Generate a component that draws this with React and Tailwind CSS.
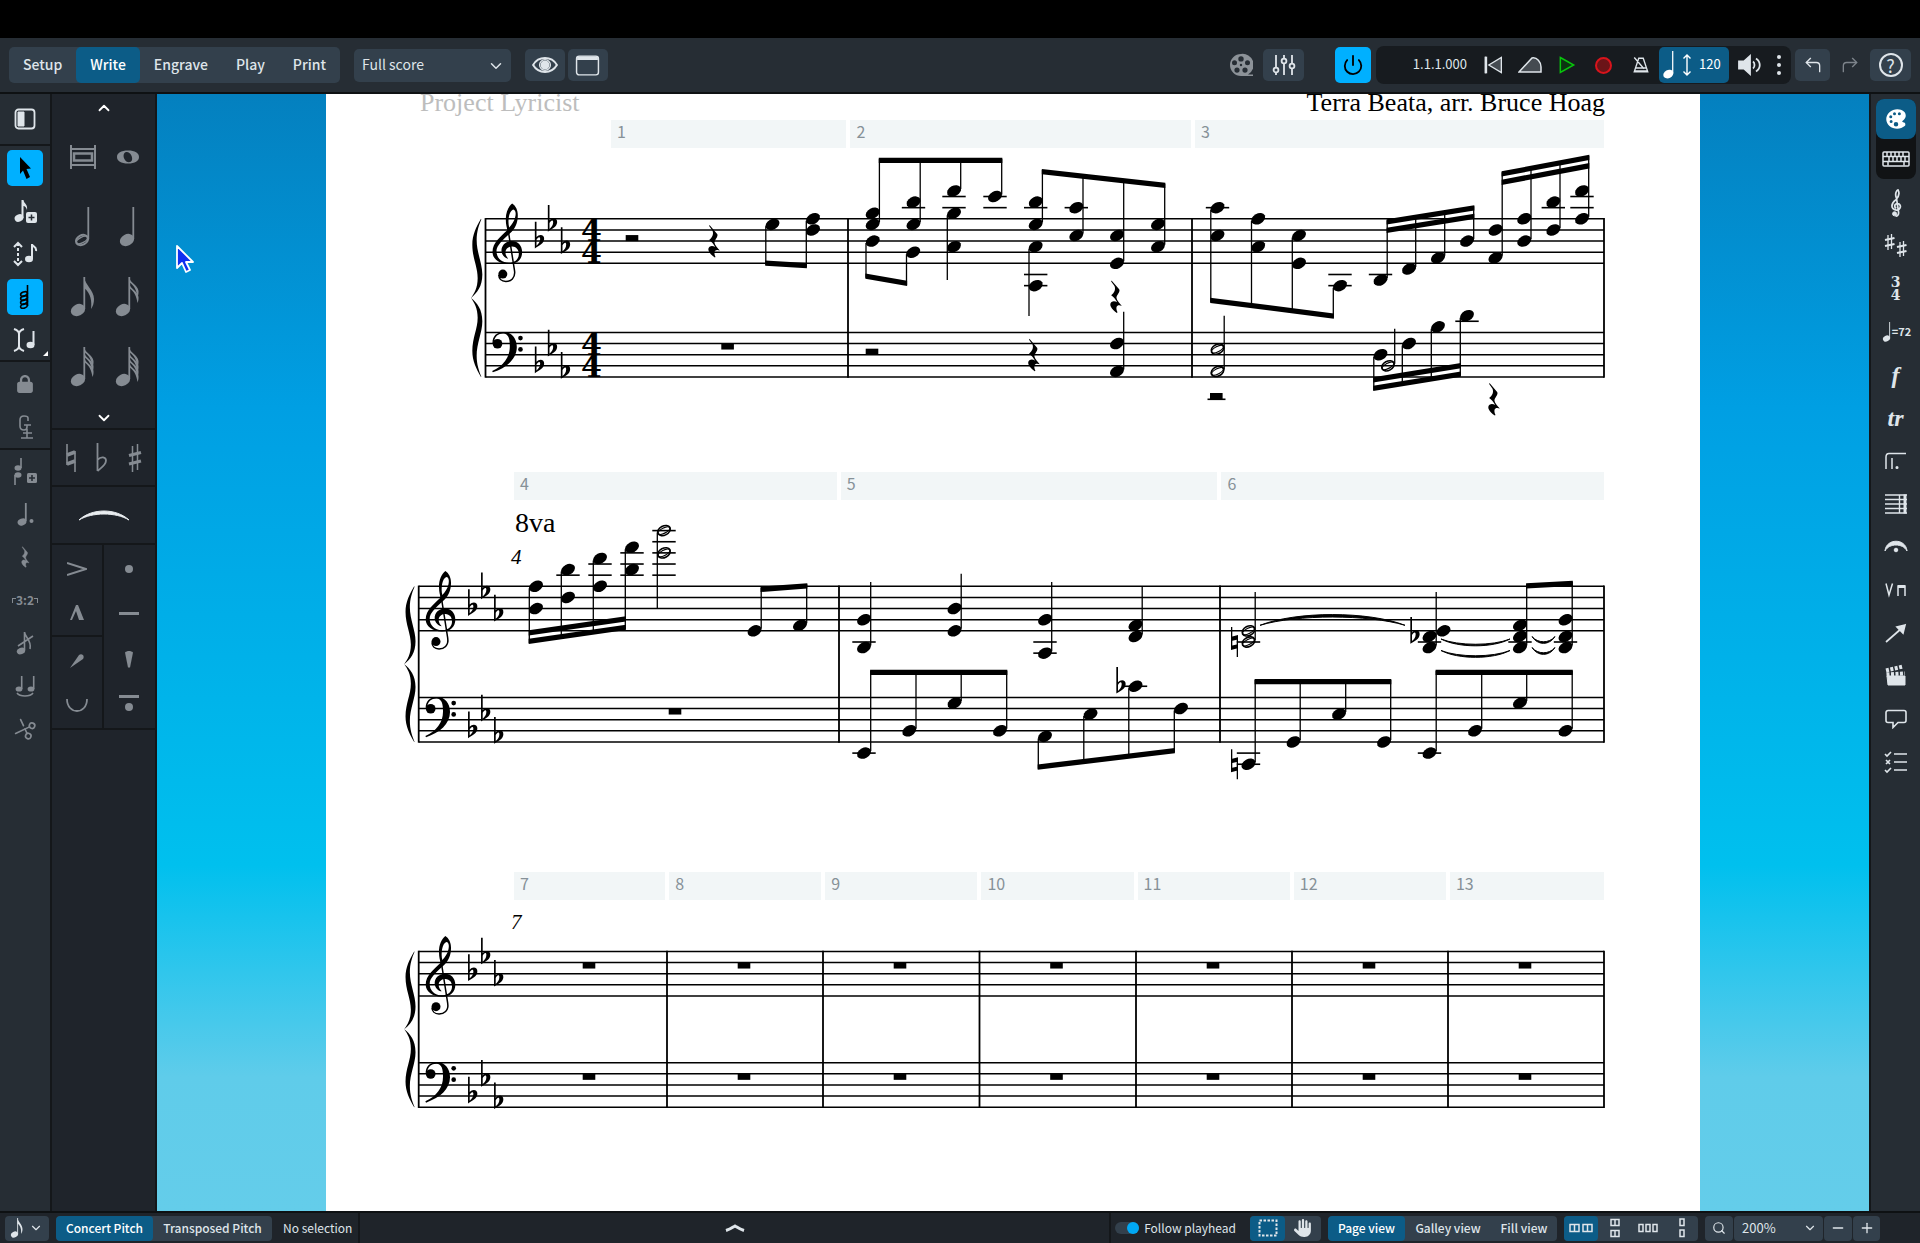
import { ChevronDown, ChevronUp, CornerUpLeft, CornerUpRight, Minus, Plus, Power, Search, Scissors } from 'lucide-react';
import { FaHand, FaLock } from 'react-icons/fa6';
import { IoColorPalette } from 'react-icons/io5';

/* ---------- engraving ---------- */

const HALF = 5.57; // half a staff space

function ledgersFor(positions) {
  const out = [];
  const min = Math.min(...positions);
  const max = Math.max(...positions);
  for (let p = -2; p >= min; p -= 2) out.push(p);
  for (let p = 10; p <= max; p += 2) out.push(p);
  return out;
}

function Head({ x, y, open }) {
  if (open) {
    return (
      <g transform={`translate(${x} ${y}) rotate(-28)`}>
        <ellipse rx="6.7" ry="4.6" fill="none" stroke="#000" strokeWidth="1.6" />
        <ellipse rx="6.4" ry="2.6" fill="none" stroke="#000" strokeWidth="1.2" />
      </g>
    );
  }
  return <ellipse rx="7.4" ry="5.2" transform={`translate(${x} ${y}) rotate(-28)`} />;
}

// n: x, p (staff positions from the top line), up / down (where the stem ends), open
function Note({ n, top }) {
  const ys = n.p.map((p) => top + p * HALF);
  const stemX = n.up !== undefined ? n.x + 6.7 : n.x - 6.7;
  const from = n.up !== undefined ? Math.max(...ys) - 2 : Math.min(...ys) + 2;
  const to = n.up !== undefined ? n.up : n.down;
  return (
    <g>
      {ledgersFor(n.p).map((p) => (
        <line key={p} x1={n.x - 11.7} x2={n.x + 11.7} y1={top + p * HALF} y2={top + p * HALF} stroke="#000" strokeWidth="1.6" />
      ))}
      {ys.map((y) => <Head key={y} x={n.x} y={y} open={n.open} />)}
      {to !== undefined && <line x1={stemX} x2={stemX} y1={from} y2={to} stroke="#000" strokeWidth="1.3" />}
    </g>
  );
}

// A beamed run. The beam line is the outer edge, dir 1 puts the stems above it.
function Beamed({ g, top }) {
  const { notes, y1, y2, dir, count = 1 } = g;
  const side = dir === 1 ? -6.7 : 6.7;
  const xa = notes[0][0] + side;
  const xb = notes[notes.length - 1][0] + side;
  const at = (x) => y1 + ((y2 - y1) * (x - xa)) / (xb - xa);
  return (
    <g>
      {notes.map(([x, ...p]) => (
        <Note key={x} top={top} n={dir === 1 ? { x, p, down: at(x + side) - 1 } : { x, p, up: at(x + side) + 1 }} />
      ))}
      {Array.from({ length: count }, (_, i) => {
        const d = -dir * i * 8.4;
        const t = -dir * 5.3;
        return (
          <polygon
            key={i}
            points={`${xa - 0.6},${y1 + d} ${xb + 0.6},${y2 + d} ${xb + 0.6},${y2 + d + t} ${xa - 0.6},${y1 + d + t}`}
          />
        );
      })}
    </g>
  );
}

function Flat({ x, y }) {
  return (
    <path
      fillRule="evenodd"
      transform={`translate(${x} ${y}) scale(0.333)`}
      d="M-2-58h5V-12C11-22 27-20 26-6C25 7 12 14-2 22ZM3-4V14C9 9 14 3 14-6C14-14 8-14 3-4Z"
    />
  );
}

function Natural({ x, y }) {
  return <path fillRule="evenodd" transform={`translate(${x} ${y})`} d="M-3.5-15h1.3V-5.5L3.5-7V15H2.2V6.5L-3.5 8ZM-2.2-1.2V3.6L2.2 2.5V-2.3Z" />;
}

function QuarterRest({ x, y }) {
  return (
    <path
      transform={`translate(${x} ${y}) scale(0.333)`}
      d="M-12-49L11-22C16-14 2-4 3 4C4 12 13 20 19 28C6 22-2 30 6 47L4 49C-12 38-21 24-12 16C-6 12 0 14 5 17C0 8-7 0-13-4C-3-12 1-22-3-32L-13-46Z"
    />
  );
}

function BlockRest({ x, line, hang }) {
  return <rect x={x - 6.3} y={hang ? line : line - 6} width="12.6" height="6" />;
}

function TrebleClef({ x, y }) {
  return (
    <g transform={`translate(${x} ${y}) scale(0.333) translate(-98 -71)`}>
      <path
        fillRule="evenodd"
        d="M157 25C146 34 137 52 138 74C138 88 141 97 143 105C124 124 98 142 98 171C98 192 119 207 147 207C172 207 187 193 187 171C187 152 174 138 156 138C138 138 124 151 125 168C126 181 136 190 146 191C142 187 136 180 137 170C138 160 147 154 157 154C170 154 178 165 177 178C176 194 163 203 147 203C124 203 110 188 110 168C110 151 130 133 150 115C166 100 174 84 174 60C174 45 168 32 157 25ZM160 43C168 44 169 56 166 66C163 78 156 88 148 97C143 78 147 48 160 43Z"
      />
      <path d="M144 98L164 226C168 250 152 259 138 259C124 259 117 250 117 240" fill="none" stroke="#000" strokeWidth="4.5" />
      <circle cx="129" cy="237" r="13.5" />
    </g>
  );
}

function BassClef({ x, y }) {
  return (
    <g transform={`translate(${x} ${y}) scale(0.333) translate(-98 -412)`}>
      <path d="M98 446C97 424 110 411 132 411C156 411 171 430 171 456C171 492 140 518 99 532L97 528C130 512 150 488 150 454C150 430 146 416 130 415C115 415 105 424 103 438Z" />
      <circle cx="113" cy="446" r="14.5" />
      <circle cx="182" cy="429" r="7" />
      <circle cx="182" cy="463" r="7" />
    </g>
  );
}

function Brace({ x, top, bottom }) {
  const half = 'M30-238C16-214 4-190 4-160C4-120 20-94 20-60C20-30 10-14 0 0C18-14 34-34 34-70C34-104 17-136 17-174C17-200 24-220 31-237Z';
  return (
    <g transform={`translate(${x} ${(top + bottom) / 2}) scale(0.333 ${(bottom - top) / 476})`}>
      <path d={half} />
      <path d={half} transform="scale(1 -1)" />
    </g>
  );
}

function Four({ x, y }) {
  return (
    <text x={x} y={y} textAnchor="middle" className="font-['DejaVu_Serif',serif] text-[30px] font-bold">4</text>
  );
}

function System({ sys }) {
  const { left, treble, bass, view, bars } = sys;
  const right = 1604;
  const bottom = bass + HALF * 8;
  return (
    <svg viewBox={view} className="block w-full h-auto" role="img" aria-label={sys.label}>
      <Brace x={left - 14.5} top={treble} bottom={bottom} />
      {[treble, bass].map((top) => [0, 2, 4, 6, 8].map((p) => (
        <line key={`${top}-${p}`} x1={left} x2={right} y1={top + p * HALF} y2={top + p * HALF} stroke="#000" strokeWidth="1.5" />
      )))}
      {[left, ...bars, right].map((x) => (
        <line key={x} x1={x} x2={x} y1={treble - 0.7} y2={bottom + 0.7} stroke="#000" strokeWidth="1.8" />
      ))}
      <TrebleClef x={left + 7} y={treble} />
      <BassClef x={left + 7} y={bass} />
      {[[50, 4, 6], [63, 1, 3], [76, 5, 7]].map(([dx, t, b]) => (
        <g key={dx}>
          <Flat x={left + dx} y={treble + t * HALF} />
          <Flat x={left + dx} y={bass + b * HALF} />
        </g>
      ))}
      {sys.time && [treble, bass].map((top) => (
        <g key={top}>
          <Four x={left + 106} y={top + HALF * 4} />
          <Four x={left + 106} y={top + HALF * 8} />
        </g>
      ))}
      {['t', 'b'].map((s) => {
        const top = s === 't' ? treble : bass;
        const part = sys[s];
        return (
          <g key={s}>
            {(part.beams || []).map((g, i) => <Beamed key={i} g={g} top={top} />)}
            {(part.notes || []).map((n, i) => <Note key={i} n={n} top={top} />)}
            {(part.quarterRests || []).map(([x, y]) => <QuarterRest key={x} x={x} y={y} />)}
            {(part.halfRests || []).map((x) => <BlockRest key={x} x={x} line={top + HALF * 4} />)}
            {(part.wholeRests || []).map((x) => <BlockRest key={x} x={x} line={top + HALF * 2} hang />)}
            {(part.flats || []).map(([x, p]) => <Flat key={x} x={x} y={top + p * HALF} />)}
            {(part.naturals || []).map(([x, p]) => <Natural key={x} x={x} y={top + p * HALF} />)}
          </g>
        );
      })}
      {(sys.ties || []).map(([x1, x2, y, bend]) => {
        const w = (x2 - x1) / 4;
        return (
          <path
            key={`${x1}-${y}`}
            d={`M${x1} ${y}C${x1 + w} ${y + bend} ${x2 - w} ${y + bend} ${x2} ${y}C${x2 - w} ${y + bend * 1.3} ${x1 + w} ${y + bend * 1.3} ${x1} ${y}Z`}
            stroke="#000"
            strokeWidth="1"
          />
        );
      })}
      {sys.extra}
    </svg>
  );
}

const SYSTEMS = [
  {
    label: 'Bars 1 to 3',
    view: '326 1 1374 324',
    left: 485.5, treble: 71.8, bass: 185.4, time: true,
    bars: [848, 1192],
    ribbon: { pad: 'pl-[285px]', cells: [[1, 234], [2, 341], [3, 411]] },
    t: {
      beams: [
        { notes: [[772.5, 1], [813, 0, 2]], y1: 118.7, y2: 121.3, dir: 1 },
        { notes: [[872.7, -1, 1], [913.5, -3, 1], [954, -5], [995, -4]], y1: 10.7, y2: 10.7, dir: -1 },
        { notes: [[872.7, 4], [913.2, 6]], y1: 131.7, y2: 139, dir: 1 },
        { notes: [[1035.7, -3, 1], [1076.3, -2, 3], [1117, 3, 8], [1158, 1, 5]], y1: 22, y2: 35.7, dir: -1 },
        { notes: [[1217.5, -2, 3], [1258.2, 0, 5], [1299, 3, 8], [1340, 12]], y1: 156, y2: 171.7, dir: 1 },
        { notes: [[1380.5, 11], [1409, 9], [1438, 7], [1467, 4]], y1: 72.3, y2: 58.3, dir: -1, count: 2 },
        { notes: [[1495.5, 2, 7], [1524.3, 0, 4], [1553.3, -3, 2], [1582, -5, 0]], y1: 24.3, y2: 7.7, dir: -1, count: 2 },
      ],
      notes: [
        { x: 954, p: [-1, 5], down: 133 },
        { x: 1035.7, p: [5, 12], down: 169 },
      ],
      halfRests: [632],
      quarterRests: [[713.5, 94.3], [1115.5, 149.7]],
    },
    b: {
      beams: [
        { notes: [[1380.5, 4], [1409, 2], [1438, -1], [1467, -3]], y1: 244, y2: 229.7, dir: 1, count: 2 },
      ],
      notes: [
        { x: 1117, p: [2, 7], up: 164.7 },
        { x: 1217.5, p: [3, 7], up: 168.7, open: true },
        { x: 1388, p: [6], up: 181.7, open: true },
      ],
      wholeRests: [727.6],
      halfRests: [872],
      quarterRests: [[1033.4, 208], [1493.5, 252.3]],
    },
    extra: (
      <g>
        <rect x="1210" y="246" width="12.6" height="6" />
        <line x1="1207.5" x2="1225.5" y1="252.3" y2="252.3" stroke="#000" strokeWidth="1.6" />
      </g>
    ),
  },
  {
    label: 'Bars 4 to 6',
    view: '326 0 1374 372',
    left: 418.7, treble: 86.3, bass: 197.4,
    bars: [839, 1220],
    ribbon: { pad: 'pl-[188px]', cells: [[4, 322], [5, 377], [6, 383]] },
    t: {
      beams: [
        { notes: [[536, 0, 4], [568, -3, 2], [600, -5, 0], [632, -7, -3]], y1: 144, y2: 130, dir: 1, count: 2 },
        { notes: [[754.5, 8], [800, 7]], y1: 86.7, y2: 83.3, dir: -1 },
        { notes: [[1520, 7, 9, 11], [1565.5, 6, 9, 11]], y1: 83.3, y2: 80.7, dir: -1 },
      ],
      notes: [
        { x: 664, p: [-10, -6], down: 108, open: true },
        { x: 864, p: [6, 11], up: 82 },
        { x: 954.5, p: [4, 8], up: 73.7 },
        { x: 1045, p: [6, 12], up: 82 },
        { x: 1135.5, p: [7, 9], up: 86 },
        { x: 1248.5, p: [8, 10], up: 92, open: true },
        { x: 1429.5, p: [9, 11], up: 92 },
        { x: 1443.5, p: [8] },
      ],
      flats: [[1411, 9]],
      naturals: [[1234.5, 10]],
    },
    b: {
      beams: [
        { notes: [[864, 10], [909.3, 6], [954.5, 1], [1000, 6]], y1: 169.7, y2: 169.7, dir: -1 },
        { notes: [[1045, 7], [1090.5, 3], [1135.5, -2], [1181, 2]], y1: 269.7, y2: 253.3, dir: 1 },
        { notes: [[1248.5, 12], [1293.5, 8], [1339, 3], [1384, 8]], y1: 179, y2: 179, dir: -1 },
        { notes: [[1429.5, 10], [1475, 6], [1520, 1], [1565.5, 6]], y1: 169.7, y2: 169.7, dir: -1 },
      ],
      wholeRests: [675],
      flats: [[1117, -2]],
      naturals: [[1234.5, 12]],
    },
    ties: [
      [1260, 1405, 125.3, -11],
      [1441, 1510, 139, 7],
      [1441, 1510, 150.5, 7],
      [1532, 1555, 136.5, 7],
      [1532, 1555, 147.5, 7],
    ],
    extra: (
      <g>
        <text x="515" y="32" className="font-['Liberation_Serif',serif] text-[28px]">8va</text>
        <text x="511" y="64" className="font-['Liberation_Serif',serif] text-[21px] italic">4</text>
      </g>
    ),
  },
  {
    label: 'Bars 7 to 13',
    view: '326 0 1374 372',
    left: 418.7, treble: 51.4, bass: 162.7,
    bars: [667, 823, 979.5, 1136, 1292, 1448],
    ribbon: { pad: 'pl-[188px]', cells: [[7, 151], [8, 152], [9, 152], [10, 152], [11, 152], [12, 152], [13, 154]] },
    t: { wholeRests: [589, 744, 900, 1056.5, 1213, 1369, 1525] },
    b: { wholeRests: [589, 744, 900, 1056.5, 1213, 1369, 1525] },
    extra: <text x="511" y="29" className="font-['Liberation_Serif',serif] text-[21px] italic">7</text>,
  },
];

function Paper() {
  return (
    <article className="mx-auto w-full max-w-[1374px] bg-white text-black">
      <header className="flex h-[26px] justify-between pr-[95px] pl-[94px] font-['Liberation_Serif',serif] text-[26px] leading-[18px] whitespace-nowrap">
        <span className="text-[#bdbdbd]">Project Lyricist</span>
        <span>Terra Beata, arr. Bruce Hoag</span>
      </header>
      {SYSTEMS.map((sys) => (
        <section key={sys.label}>
          <div className={`flex gap-1 pr-24 ${sys.ribbon.pad}`}>
            {sys.ribbon.cells.map(([n, w]) => (
              <div key={n} className="flex h-7 basis-0 items-center bg-[#f2f6f7] pb-1.5 pl-1.5 text-base leading-5 text-[#869198]" style={{ flexGrow: w }}>
                {n}
              </div>
            ))}
          </div>
          <System sys={sys} />
        </section>
      ))}
    </article>
  );
}

/* ---------- note icons ---------- */

function NoteIcon({ flags = 0, open, className = 'w-7 h-10' }) {
  return (
    <svg viewBox={flags ? '0 0 28 40' : '-4 0 28 40'} className={className} fill="currentColor">
      {open ? (
        <g transform="translate(9 33) rotate(-28)" fill="none" stroke="currentColor">
          <ellipse rx="6.4" ry="4.8" strokeWidth="2" />
          <ellipse rx="6" ry="2.8" strokeWidth="1.4" />
        </g>
      ) : (
        <ellipse rx="7.4" ry="5.8" transform="translate(9 33) rotate(-28)" />
      )}
      <path d="M14.4 0h1.8v32h-1.800z" />
      {Array.from({ length: flags }, (_, i) => (
        <path
          key={i}
          transform={`translate(0 ${i * (flags > 2 ? 5 : 6)})`}
          d={flags === 1
            ? 'M15 0C16 8 25 13 25 22C25 26 24 29 22 32C23 25 22 16 15 11Z'
            : 'M15 0C16 6 24 8 24.500 14C24.600 16 24.500 18 23.500 20C22.500 13 20 8 15 5Z'}
        />
      ))}
    </svg>
  );
}

function Svg({ box = '0 0 24 24', className = 'w-6 h-6', children, ...rest }) {
  return (
    <svg viewBox={box} className={className} fill="none" stroke="currentColor" strokeWidth="2" {...rest}>
      {children}
    </svg>
  );
}

/* ---------- top toolbar ---------- */

const MODES = ['Setup', 'Write', 'Engrave', 'Play', 'Print'];
const TOOL = 'flex items-center justify-center rounded-[5px] bg-[#33404c]';

function TopBar() {
  return (
    <header className="flex h-[56px] shrink-0 items-center border-b-2 border-[#0e1113] bg-[#262d34] pr-[9px] pl-[9px]">
      <nav className="flex h-9 overflow-hidden rounded-[5px] bg-[#33404c]">
        {MODES.map((m) => (
          <button key={m} className={`px-3.5 pb-0.5 text-sm font-medium ${m === 'Write' ? 'rounded-[5px] bg-[#0c5c87] text-white' : ''}`}>
            {m}
          </button>
        ))}
      </nav>

      <div className="relative ml-3.5">
        <select aria-label="Layout" className="h-[33px] w-[157px] appearance-none rounded-[5px] bg-[#33404c] pb-0.5 pl-2 text-sm">
          <option>Full score</option>
        </select>
        <ChevronDown className="pointer-events-none absolute top-2 right-1.5 h-[18px] w-[18px]" />
      </div>

      <button aria-label="View options" className={`${TOOL} ml-3.5 h-8 w-10`}>
        <Svg className="h-[26px] w-[26px]" strokeWidth="1.800">
          <path d="M1 12C6 3.500 18 3.500 23 12C18 20.500 6 20.500 1 12Z" />
          <circle cx="12" cy="12" r="5" strokeWidth="1.200" />
          <circle cx="12" cy="12" r="3.200" fill="currentColor" />
        </Svg>
      </button>
      <button aria-label="Window" className={`${TOOL} ml-[3px] h-8 w-10`}>
        <Svg className="h-[25px] w-[25px]" strokeWidth="1.400">
          <rect x="1.500" y="3" width="21" height="18" rx="2.500" />
          <path d="M2 5h20" strokeWidth="3.500" />
        </Svg>
      </button>

      <div className="ml-auto flex items-center">
        <button aria-label="Video" className="mr-2.5 text-[#8c9298]">
          <Svg strokeWidth="0" fill="currentColor">
            <path
              fillRule="evenodd"
              d="M12 1a11 11 0 1 0 0 22h12v-1.500h-5A11 11 0 0 0 12 1ZM12 3.200a2.700 2.700 0 1 1 0 5.400a2.700 2.700 0 0 1 0-5.400ZM5.500 7.200a2.500 2.500 0 1 1 0 5a2.500 2.500 0 0 1 0-5ZM18.500 7.200a2.500 2.500 0 1 1 0 5a2.500 2.500 0 0 1 0-5ZM12 10.800a1.200 1.200 0 1 1 0 2.400a1.200 1.200 0 0 1 0-2.400ZM8 14.500a2.600 2.600 0 1 1 0 5.200a2.600 2.600 0 0 1 0-5.200ZM16 14.500a2.600 2.600 0 1 1 0 5.200a2.600 2.600 0 0 1 0-5.200Z"
            />
          </Svg>
        </button>
        <button aria-label="Mixer" className={`${TOOL} h-8 w-[41px]`}>
          <Svg strokeWidth="1.800">
            <path d="M4 2v12M4 20v2M12 2v3M12 11v11M20 2v8M20 16v6" />
            <circle cx="4" cy="17" r="2.400" />
            <circle cx="12" cy="8" r="2.400" />
            <circle cx="20" cy="13" r="2.400" />
          </Svg>
        </button>
        <button aria-label="Activate project" className="ml-[31px] flex h-9 w-9 items-center justify-center rounded-[5px] bg-[#00b0ff] text-black">
          <Power className="h-[22px] w-[22px]" strokeWidth={2} />
        </button>

        <div className="ml-[5px] flex h-[38px] items-center rounded-lg bg-[#171b1f]">
          <span className="w-[98px] pr-[7px] pb-0.5 text-right text-[13px]">1.1.1.000</span>
          <button aria-label="Rewind" className="flex w-[37px] justify-center">
            <Svg className="h-5 w-5" strokeWidth="1.600" fill="#454b51">
              <path d="M3 2v20M22 3v18L7 12Z" />
              <path d="M3.500 2v20" strokeWidth="3" />
            </Svg>
          </button>
          <button aria-label="Play from here" className="flex w-[37px] justify-center">
            <Svg strokeWidth="1.500" fill="#454b51">
              <path d="M1 19L14 5C19 4 23 9 23 14V19Z" />
            </Svg>
          </button>
          <button aria-label="Play" className="flex w-[37px] justify-center text-[#08c40c]">
            <Svg className="h-5 w-5" strokeWidth="1.800" fill="#0b3510">
              <path d="M4 3L20 12L4 21Z" />
            </Svg>
          </button>
          <button aria-label="Record" className="flex w-[37px] justify-center">
            <span className="h-[17px] w-[17px] rounded-full border-2 border-[#d8141c] bg-[#6b1418]" />
          </button>
          <button aria-label="Click" className="flex w-[37px] justify-center">
            <Svg className="h-[18px] w-[18px]" strokeWidth="1.800">
              <path d="M9 3h6l6 18H3ZM5 16h14M16 17L3 2M3 20h18" />
            </Svg>
          </button>
          <button aria-label="Tempo" className="flex h-9 w-[70px] items-center rounded-[5px] bg-[#0c5c87] text-[13px] text-white">
            <NoteIcon className="h-7 w-5" />
            <Svg box="0 0 10 24" className="mx-0.5 h-6 w-3" strokeWidth="1.400">
              <path d="M5 2v20M1.500 5.500L5 2L8.500 5.500M1.500 18.500L5 22L8.500 18.500" />
            </Svg>
            <span className="ml-1 pb-0.5">120</span>
          </button>
          <button aria-label="Volume" className="flex w-[38px] justify-center pl-1">
            <Svg strokeWidth="1.800">
              <path d="M1 8.500h5L12 3v18L6 15.500H1Z" fill="currentColor" />
              <path d="M15 8.500C17 10 17 14 15 15.500M18 5.500C23 9 23 15 18 18.500" />
            </Svg>
          </button>
          <button aria-label="More" className="flex w-6 justify-center">
            <Svg strokeWidth="0" fill="currentColor">
              <circle cx="12" cy="4" r="2" />
              <circle cx="12" cy="12" r="2" />
              <circle cx="12" cy="20" r="2" />
            </Svg>
          </button>
        </div>

        <button aria-label="Undo" className={`${TOOL} ml-1 h-8 w-[35px]`}>
          <CornerUpLeft className="h-5 w-5" strokeWidth={1.6} />
        </button>
        <button aria-label="Redo" className="flex w-10 justify-center text-[#7d848b]">
          <CornerUpRight className="h-5 w-5" strokeWidth={1.6} />
        </button>
        <button aria-label="Help" className={`${TOOL} h-8 w-[41px]`}>
          <span className="flex h-6 w-6 items-center justify-center rounded-full border-2 border-[#dfe5ea] text-lg leading-none">?</span>
        </button>
      </div>
    </header>
  );
}

/* ---------- left side ---------- */

function RailButton({ label, active, children }) {
  return (
    <button aria-label={label} className={`flex h-9 w-9 items-center justify-center rounded-[5px] ${active ? 'bg-[#00b0ff] text-black' : ''}`}>
      {children}
    </button>
  );
}

function LeftRail() {
  return (
    <aside className="flex w-[52px] shrink-0 flex-col border-r-2 border-[#14171a] bg-[#262d34]">
      <div className="flex h-[52px] items-center justify-center border-b-2 border-[#14171a]">
        <RailButton label="Show panels">
          <Svg className="h-6 w-6" strokeWidth="1.800">
            <rect x="2.500" y="2.500" width="19" height="19" rx="3" />
            <path d="M5 5h6v14H5Z" fill="currentColor" strokeWidth="1" />
          </Svg>
        </RailButton>
      </div>

      <div className="relative flex h-[216px] flex-col items-center gap-[7px] border-b-2 border-[#14171a] pt-1">
        <RailButton label="Select" active>
          <Svg strokeWidth="0" fill="currentColor">
            <path d="M7 1L18 12.500L13.500 13L17 21L13.500 23L10 14.500L7 18Z" />
          </Svg>
        </RailButton>
        <RailButton label="Note input">
          <Svg box="0 0 26 26" className="h-[26px] w-[26px]" strokeWidth="0" fill="currentColor">
            <ellipse cx="7" cy="20" rx="4.500" ry="3.600" transform="rotate(-25 7 20)" />
            <path d="M9.500 2h2C12 6 16 6 15 12C14 9 13 8 11.500 8V20h-2Z" />
            <rect x="14" y="14" width="11" height="11" rx="2" />
            <path d="M19.500 16.500v6M16.500 19.500h6" stroke="#262d34" strokeWidth="1.500" />
          </Svg>
        </RailButton>
        <RailButton label="Pitch before duration">
          <Svg box="0 0 26 26" className="h-[26px] w-[26px]" strokeWidth="2">
            <path d="M6 2v22" strokeDasharray="3 2" />
            <path d="M2 6L6 2L10 6M2 20L6 24L10 20" />
            <ellipse cx="17" cy="18" rx="4" ry="3.200" fill="currentColor" strokeWidth="0" />
            <path d="M20 18V3C20 6 25 5 24 10" />
          </Svg>
        </RailButton>
        <RailButton label="Chord input" active>
          <Svg strokeWidth="1.600">
            <ellipse cx="11" cy="21" rx="3.500" ry="2" transform="rotate(-20 11 21)" />
            <ellipse cx="11" cy="17" rx="3.500" ry="2" transform="rotate(-20 11 17)" />
            <ellipse cx="11" cy="13" rx="3.500" ry="2" transform="rotate(-20 11 13)" />
            <ellipse cx="11" cy="9" rx="3.500" ry="2" transform="rotate(-20 11 9)" />
            <path d="M14.500 21V0" />
          </Svg>
        </RailButton>
        <RailButton label="Insert mode">
          <Svg box="0 0 26 26" className="h-[26px] w-[26px]" strokeWidth="2">
            <path d="M2 2C5 3 7 4 7 7V19C7 22 5 23 2 24M12 2C9 3 7 4 7 7M12 24C9 23 7 22 7 19" />
            <ellipse cx="18.500" cy="18" rx="4" ry="3.200" fill="currentColor" strokeWidth="0" />
            <path d="M21.500 18V4" />
          </Svg>
        </RailButton>
        <span className="absolute right-0.5 bottom-1 border-b-[5px] border-l-[5px] border-b-white border-l-transparent" />
      </div>

      <div className="flex h-[88px] flex-col items-center gap-[7px] border-b-2 border-[#14171a] pt-1 text-[#858b92]">
        <RailButton label="Lock duration"><FaLock className="h-[18px] w-[18px]" /></RailButton>
        <RailButton label="Force duration">
          <Svg strokeWidth="1.600">
            <path d="M15 6V3C15 1 13 1 11 1C8 1 7 3 7 5V11C7 14 9 15 11 15C13 15 14 14 14 12V10M11 10h7M14 14v9M10 18h9M8 23h12" />
          </Svg>
        </RailButton>
      </div>

      <div className="flex flex-1 flex-col items-center gap-[7px] pt-[3px] text-[#858b92]">
        <RailButton label="Add notes">
          <Svg box="0 0 26 28" className="h-7 w-[26px]" strokeWidth="1.600">
            <ellipse cx="6" cy="11" rx="3.500" ry="2.800" fill="currentColor" strokeWidth="0" />
            <path d="M9 11V1M3 18v10" />
            <ellipse cx="6" cy="18" rx="3.500" ry="2.800" fill="currentColor" strokeWidth="0" />
            <rect x="15" y="16" width="10" height="10" rx="1.500" fill="currentColor" strokeWidth="0" />
            <path d="M20 18v6M17 21h6" stroke="#262d34" />
          </Svg>
        </RailButton>
        <RailButton label="Dotted note">
          <Svg strokeWidth="1.800">
            <ellipse cx="9" cy="20" rx="4.500" ry="3.400" fill="currentColor" strokeWidth="0" transform="rotate(-20 9 20)" />
            <path d="M12.800 19V1" />
            <circle cx="18.500" cy="19" r="2" fill="currentColor" strokeWidth="0" />
          </Svg>
        </RailButton>
        <RailButton label="Rest">
          <Svg box="-20 -52 40 104" className="h-[22px] w-4" strokeWidth="2" fill="currentColor">
            <path d="M-12-49L11-22C16-14 2-4 3 4C4 12 13 20 19 28C6 22-2 30 6 47L4 49C-12 38-21 24-12 16C-6 12 0 14 5 17C0 8-7 0-13-4C-3-12 1-22-3-32L-13-46Z" />
          </Svg>
        </RailButton>
        <RailButton label="Tuplets">
          <span className="flex items-center text-xs font-bold">
            <i className="h-[5px] w-1 border-t border-l border-[#858b92]" />
            <span>3:2</span>
            <i className="h-[5px] w-1 border-t border-r border-[#858b92]" />
          </span>
        </RailButton>
        <RailButton label="Grace notes">
          <Svg strokeWidth="1.600">
            <ellipse cx="8" cy="20" rx="4.300" ry="3.300" fill="currentColor" strokeWidth="0" transform="rotate(-20 8 20)" />
            <path d="M11.500 19V1C12 7 19 9 17 18M5 15L20 5" />
          </Svg>
        </RailButton>
        <RailButton label="Tie">
          <Svg strokeWidth="1.600">
            <ellipse cx="6" cy="15" rx="3.400" ry="2.600" fill="currentColor" strokeWidth="0" />
            <ellipse cx="18" cy="15" rx="3.400" ry="2.600" fill="currentColor" strokeWidth="0" />
            <path d="M8.700 15V2M20.700 15V2M4 19C7 23 17 23 20 19" />
          </Svg>
        </RailButton>
        <RailButton label="Scissors"><Scissors className="h-[22px] w-[22px] rotate-[200deg]" strokeWidth={1.8} /></RailButton>
      </div>
    </aside>
  );
}

function Cell({ label, className = 'h-[44px]', children }) {
  return (
    <button aria-label={label} className={`flex w-full items-center justify-center ${className}`}>
      {children}
    </button>
  );
}

const LINE = 'border-[#14171a]';

function NotesPanel() {
  return (
    <aside className={`w-[105px] shrink-0 border-r-2 ${LINE} bg-[#1f242b] text-[#858b92]`}>
      <div className={`flex h-[336px] flex-col items-center border-b-2 ${LINE}`}>
        <button aria-label="Scroll up" className="flex h-7 shrink-0 items-center text-white"><ChevronUp className="h-[18px] w-[18px]" strokeWidth={2.4} /></button>
        <div className="grid shrink-0 grid-cols-2 gap-x-[17px] pl-1">
          <Cell label="Double whole note" className="h-[70px]">
            <Svg box="0 0 28 24" className="h-6 w-7" strokeWidth="2">
              <path d="M2 0v24M26 0v24M2 4h24M2 20h24" />
              <path d="M5 8.500h18v7H5Z" strokeWidth="2.500" />
            </Svg>
          </Cell>
          <Cell label="Whole note" className="h-[70px]">
            <Svg box="0 0 24 16" className="h-4 w-6" strokeWidth="0" fill="currentColor">
              <path fillRule="evenodd" d="M12 1.500C19 1.500 23 4 23 8S19 14.500 12 14.500S1 12 1 8S5 1.500 12 1.500ZM10 3C7 4 7 8 9 11C11 14 15 14 16 11C17 8 14 2 10 3Z" />
            </Svg>
          </Cell>
          <Cell label="Half note" className="h-[70px]"><NoteIcon open /></Cell>
          <Cell label="Quarter note" className="h-[70px]"><NoteIcon /></Cell>
          <Cell label="Eighth note" className="h-[70px]"><NoteIcon flags={1} /></Cell>
          <Cell label="16th note" className="h-[70px]"><NoteIcon flags={2} /></Cell>
          <Cell label="32nd note" className="h-[70px]"><NoteIcon flags={3} /></Cell>
          <Cell label="64th note" className="h-[70px]"><NoteIcon flags={4} /></Cell>
        </div>
        <button aria-label="Scroll down" className="flex h-[26px] shrink-0 items-end pb-px text-white"><ChevronDown className="h-[18px] w-[18px]" strokeWidth={2.4} /></button>
      </div>

      <div className={`flex h-[57px] items-center justify-around border-b-2 ${LINE} px-1`}>
        <button aria-label="Natural">
          <Svg box="0 0 12 30" className="h-[30px] w-3" strokeWidth="1.600">
            <path d="M2 1v21M10 8v21" />
            <path d="M2 12L10 9M2 21L10 18" strokeWidth="3.500" />
          </Svg>
        </button>
        <button aria-label="Flat">
          <Svg box="0 0 14 30" className="h-[30px] w-3.5" strokeWidth="1.800">
            <path d="M2.500 0V28M2.500 17C6 13 11 14 11 17.500C11 22 6 25 2.500 28" />
          </Svg>
        </button>
        <button aria-label="Sharp">
          <Svg box="0 0 14 30" className="h-[30px] w-3.5" strokeWidth="1.500">
            <path d="M4.500 3v26M9.500 1v26" />
            <path d="M1 12.500L13 9.500M1 21L13 18" strokeWidth="3.200" />
          </Svg>
        </button>
      </div>

      <div className={`flex h-[58px] items-center justify-center border-b-2 ${LINE} text-[#e9edf0]`}>
        <button aria-label="Slur">
          <Svg box="0 0 52 12" className="h-3 w-[52px]" strokeWidth="1" fill="currentColor">
            <path d="M1 11C14-1 38-1 51 11C38 3 14 3 1 11Z" />
          </Svg>
        </button>
      </div>

      <div className={`grid grid-cols-2 border-b-2 ${LINE}`}>
        <div className={`border-r-2 ${LINE}`}>
          <div className={`h-[92px] border-b-2 ${LINE} pt-0.5`}>
            <Cell label="Accent"><Svg box="0 0 20 14" className="h-3.5 w-5"><path d="M0 1L19 7L0 13" /></Svg></Cell>
            <Cell label="Marcato">
              <Svg box="0 0 14 16" className="h-4 w-3.5" strokeWidth="0" fill="currentColor"><path d="M6 0h2L14 15H9L6 6L2 15H0Z" /></Svg>
            </Cell>
          </div>
          <div className="h-[91px] pt-0.5">
            <Cell label="Stress">
              <Svg box="0 0 14 14" className="h-3.5 w-3.5" strokeWidth="0" fill="currentColor"><path d="M0 14L9 1C12-1 15 2 13 5Z" /></Svg>
            </Cell>
            <Cell label="Unstress"><Svg box="0 0 22 13" className="h-[13px] w-[22px]" strokeWidth="1.800"><path d="M1 0C1 16 21 16 21 0" /></Svg></Cell>
          </div>
        </div>
        <div className="pt-0.5">
          <Cell label="Staccato"><span className="h-2 w-2 rounded-full bg-current" /></Cell>
          <Cell label="Tenuto"><span className="h-[3px] w-5 bg-current" /></Cell>
          <Cell label="Staccatissimo" className="h-[48px]">
            <Svg box="0 0 8 16" className="h-[17px] w-2" strokeWidth="0" fill="currentColor"><path d="M0 1C2-1 6-1 8 1L5 16H3Z" /></Svg>
          </Cell>
          <Cell label="Tenuto and staccato" className="h-10">
            <span className="flex flex-col items-center gap-[5px]">
              <span className="h-[3px] w-5 bg-current" />
              <span className="h-2 w-2 rounded-full bg-current" />
            </span>
          </Cell>
        </div>
      </div>
    </aside>
  );
}

/* ---------- right side ---------- */

function RightRail() {
  const serif = "font-['Liberation_Serif',serif]";
  const items = [
    ['Clefs', (
      <Svg box="90 20 105 245" className="h-7 w-4" strokeWidth="8" fill="none">
        <path d="M145 95C130 60 150 30 160 28C178 60 165 90 140 115C95 150 95 195 145 205C185 205 195 155 158 148C125 148 125 180 145 188M146 95L165 225C168 250 150 258 138 258" strokeWidth="15" />
        <circle cx="130" cy="237" r="18" fill="currentColor" />
      </Svg>
    )],
    ['Key signatures', (
      <Svg box="0 0 24 26" className="h-[26px] w-6" strokeWidth="1.300">
        <path d="M4 2v15M7.500 1v15M16 9v15M19.500 8v15" />
        <path d="M1 7L10.500 5M1 13L10.500 11M13 14L22.500 12M13 20L22.500 18" strokeWidth="2.200" />
      </Svg>
    )],
    ['Time signatures', (
      <span className="flex flex-col items-center font-['DejaVu_Serif',serif] text-sm leading-[13px] font-bold"><span>3</span><span>4</span></span>
    )],
    ['Tempo', (
      <span className="flex items-center text-[11px] font-bold"><NoteIcon className="-mr-0.5 h-5 w-3.5" />=72</span>
    )],
    ['Dynamics', <span className={`${serif} text-[24px] leading-5 font-bold italic`}>f</span>],
    ['Ornaments', <span className={`${serif} text-[24px] leading-5 font-bold italic`}>tr</span>],
    ['Repeat structures', <Svg box="0 0 22 18" className="h-[18px] w-[22px]" strokeWidth="1.500"><path d="M1 17V5C1 3 2 1.500 4 1.500H21M7 6v11" /><circle cx="12" cy="15.500" r="0.800" /></Svg>],
    ['Bars and barlines', <Svg box="0 0 22 22" className="h-[22px] w-[22px]" strokeWidth="1.400"><path d="M0 2h22M0 6.500h22M0 11h22M0 15.500h22M0 20h22M14.500 2v18" /><path d="M20 1.500v19" strokeWidth="3" /></Svg>],
    ['Holds and pauses', <Svg box="0 0 24 14" className="h-3.5 w-6" strokeWidth="1" fill="currentColor"><path d="M1 11C2-2 22-2 23 11C19 3 5 3 1 11Z" /><circle cx="12" cy="10" r="1.800" /></Svg>],
    ['Playing techniques', <Svg box="0 0 22 16" className="h-4 w-[22px]" strokeWidth="1.500"><path d="M1 1.500L4 13L7.500 1.500M13 14V4h7v10" /><path d="M13 4.500h7" strokeWidth="3" /></Svg>],
    ['Lines', <Svg box="0 0 22 20" className="h-5 w-[22px]" strokeWidth="1.700"><path d="M1 19L17 5" /><path d="M20 2L12 4L18 10Z" fill="currentColor" /></Svg>],
    ['Video', (
      <Svg box="0 0 24 24" className="h-6 w-6" strokeWidth="1" fill="currentColor">
        <path d="M3 12h18v9H4Z" />
        <path d="M2.500 10.500L21 9.500M2 6.500L19 2.500" strokeWidth="4" strokeDasharray="3 1.500" />
      </Svg>
    )],
    ['Comments', <Svg box="0 0 22 20" className="h-5 w-[22px]" strokeWidth="1.600"><path d="M3 1.500h16a2 2 0 0 1 2 2v8a2 2 0 0 1-2 2H13L8 18.500V13.500H3a2 2 0 0 1-2-2v-8a2 2 0 0 1 2-2Z" /></Svg>],
    ['Lyrics review', <Svg box="0 0 24 24" strokeWidth="1.600"><path d="M10 4h13M10 12h13M10 20h13M1 4L3 6L7 2M2 10L6 14M6 10L2 14M1 20L3 22L7 18" /></Svg>],
  ];
  return (
    <aside className="flex w-[51px] shrink-0 flex-col items-center border-l-2 border-[#14171a] bg-[#262d34] pt-[5px]">
      <div className="mb-1 w-10 rounded-lg bg-[#111315]">
        <button aria-label="Notations" className="flex h-10 w-10 items-center justify-center rounded-lg bg-[#0c5c87] text-white"><IoColorPalette className="h-6 w-6" /></button>
        <button aria-label="Keyboard" className="flex h-10 w-10 items-center justify-center">
          <Svg box="0 0 28 16" className="h-4 w-7" strokeWidth="1.500">
            <rect x="1" y="1" width="26" height="14" rx="1" />
            <path d="M1 5.500h26M1 10.500h26M5 1v4M9 1v4M13 1v4M17 1v4M21 1v4M7 5.500v5M11 5.500v5M15 5.500v5M19 5.500v5M23 5.500v5M6 10.500v4M22 10.500v4" />
          </Svg>
        </button>
      </div>
      {items.map(([label, icon]) => (
        <button key={label} aria-label={label} className="flex h-[43px] w-10 items-center justify-center pb-1">{icon}</button>
      ))}
    </aside>
  );
}

/* ---------- status bar ---------- */

function BottomBar() {
  return (
    <footer className="flex h-8 shrink-0 items-center border-t-2 border-[#0e1113] bg-[#1f242a] pl-[5px] text-xs">
      <button aria-label="Rhythmic grid" className="flex h-[25px] w-11 items-center justify-between rounded bg-[#33404c] pr-1.5 pl-1">
        <NoteIcon flags={1} className="h-5 w-4" />
        <ChevronDown className="h-3.5 w-3.5" />
      </button>
      <div className="ml-[7px] flex h-[25px] overflow-hidden rounded bg-[#33404c] font-medium">
        <button className="w-[97px] rounded bg-[#0c5c87] text-white">Concert Pitch</button>
        <button className="w-[119px]">Transposed Pitch</button>
      </div>
      <span className="flex h-full w-[88px] items-center border-r-2 border-[#14171a] pl-[11px] whitespace-nowrap">No selection</span>
      <div className="flex flex-1 justify-center">
        <button aria-label="Show lower zone">
          <Svg box="0 0 20 8" className="h-2 w-5" strokeWidth="3"><path d="M1 6.500C6 5 8 3 10 2C12 3 14 5 19 6.500" /></Svg>
        </button>
      </div>
      <label className="flex h-full items-center border-l-2 border-[#14171a] pl-1 whitespace-nowrap">
        <input type="checkbox" defaultChecked className="peer sr-only" />
        <span className="mr-[5px] flex h-3 w-6 items-center justify-end rounded-full bg-[#33404c]"><span className="h-3 w-3 rounded-full bg-[#00a8f4]" /></span>
        Follow playhead
      </label>
      <div className="ml-3.5 flex h-[25px] rounded bg-[#33404c]">
        <button aria-label="Marquee tool" className="flex w-[35px] items-center justify-center rounded bg-[#0c5c87]">
          <Svg box="0 0 20 18" className="h-[18px] w-5"><rect x="1.500" y="1.500" width="17" height="15" strokeDasharray="2.500 1.500" /></Svg>
        </button>
        <button aria-label="Hand tool" className="flex w-9 items-center justify-center"><FaHand className="h-[18px] w-[18px]" /></button>
      </div>
      <div className="ml-[7px] flex h-[25px] overflow-hidden rounded bg-[#33404c] font-medium">
        <button className="w-[77px] rounded bg-[#0c5c87] text-white">Page view</button>
        <button className="w-[86px]">Galley view</button>
        <button className="w-[66px]">Fill view</button>
      </div>
      <div className="ml-[7px] flex h-[25px] rounded bg-[#33404c]">
        <button aria-label="Spreads horizontally" className="flex w-[34px] items-center justify-center rounded bg-[#0c5c87]">
          <Svg box="0 0 24 10" className="h-2.5 w-6" strokeWidth="1.500"><path d="M1 1.500h9v7H1ZM5.500 1v8M14 1.500h9v7h-9ZM18.500 1v8" /></Svg>
        </button>
        <button aria-label="Spreads vertically" className="flex w-[33px] items-center justify-center">
          <Svg box="0 0 10 20" className="h-5 w-2.5" strokeWidth="1.500"><path d="M1 1.500h8v6H1ZM5 1v7M1 12.500h8v6H1ZM5 12v7" /></Svg>
        </button>
        <button aria-label="Single pages horizontally" className="flex w-[34px] items-center justify-center">
          <Svg box="0 0 20 10" className="h-2.5 w-5" strokeWidth="1.500"><path d="M1 1.500h4v7H1ZM8 1.500h4v7H8ZM15 1.500h4v7h-4Z" /></Svg>
        </button>
        <button aria-label="Single pages vertically" className="flex w-[33px] items-center justify-center">
          <Svg box="0 0 10 20" className="h-5 w-2.5" strokeWidth="1.500"><path d="M3 1h4v6.500H3ZM3 12h4v6.500H3Z" /></Svg>
        </button>
      </div>
      <div className="mr-10 ml-[7px] flex h-[25px] gap-px">
        <button aria-label="Zoom" className="flex w-7 items-center justify-center rounded bg-[#33404c]"><Search className="h-3.5 w-3.5" /></button>
        <div className="relative">
          <select aria-label="Zoom level" className="h-[25px] w-[89px] appearance-none rounded bg-[#33404c] pl-2 text-[13px]">
            <option>200%</option>
          </select>
          <ChevronDown className="pointer-events-none absolute top-[5px] right-1.5 h-3.5 w-3.5" />
        </div>
        <button aria-label="Zoom out" className="flex w-7 items-center justify-center rounded bg-[#33404c]"><Minus className="h-4 w-4" /></button>
        <button aria-label="Zoom in" className="flex w-[27px] items-center justify-center rounded bg-[#33404c]"><Plus className="h-4 w-4" /></button>
      </div>
    </footer>
  );
}

export default function App() {
  return (
    <div className="flex h-screen flex-col overflow-hidden bg-black pt-[38px] font-['Noto_Sans_CJK_SC',sans-serif] text-[#dfe5ea]">
      <TopBar />
      <div className="flex min-h-0 flex-1">
        <LeftRail />
        <NotesPanel />
        <main className="relative min-w-0 flex-1 overflow-hidden bg-[linear-gradient(180deg,#0480bf_0%,#009fe3_28%,#00c0ee_69%,#5fccea_88%,#64cdea_100%)]">
          <Paper />
          <svg viewBox="0 0 20 30" className="absolute top-[150px] left-[18px] h-[30px] w-5" aria-hidden="true">
            <path d="M2 2V24L7 19L11 28L15 26L11 18H18Z" fill="#1030f0" stroke="#fff" strokeWidth="1.800" strokeLinejoin="round" />
          </svg>
        </main>
        <RightRail />
      </div>
      <BottomBar />
    </div>
  );
}
